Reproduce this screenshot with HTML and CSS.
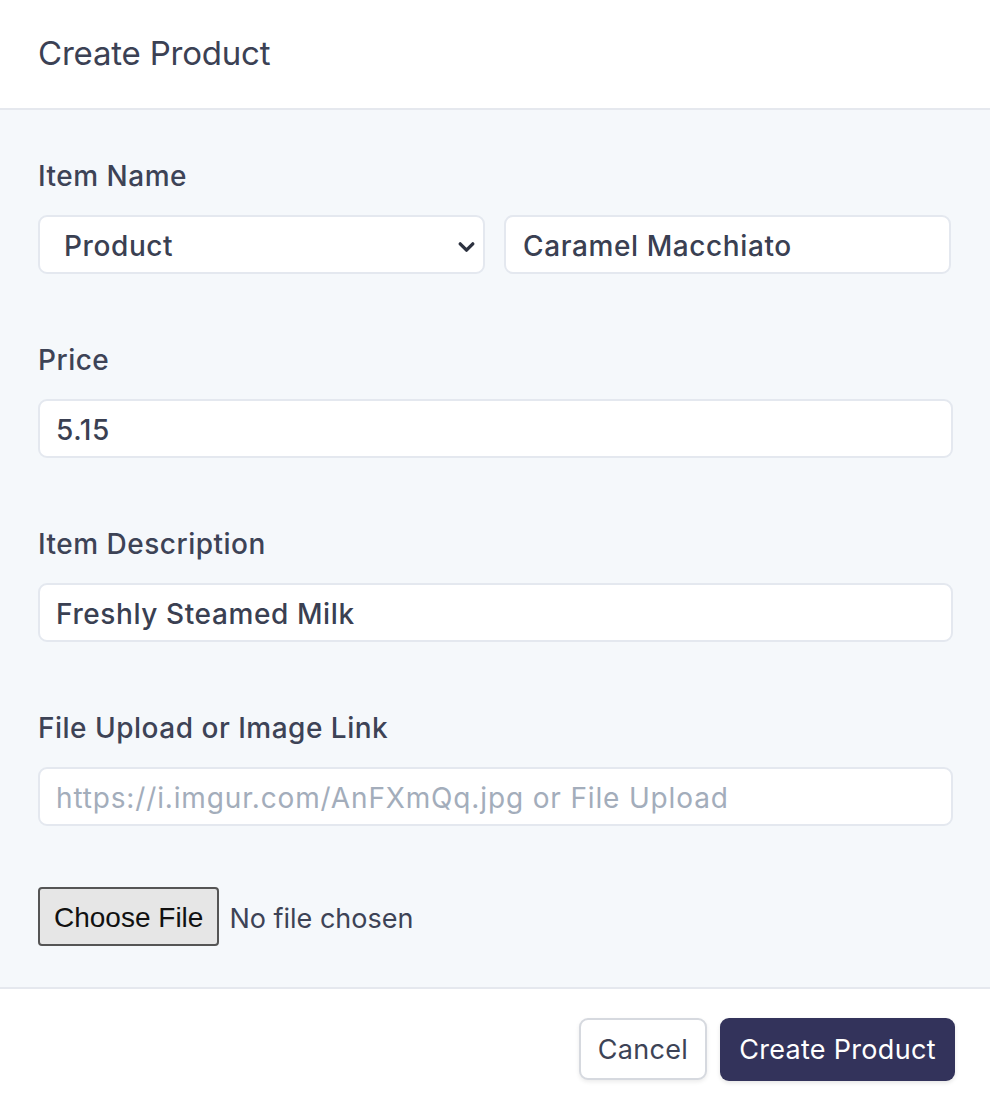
FILE: index.html
```html
<!DOCTYPE html>
<html lang="en">
<head>
<meta charset="utf-8">
<title>Create Product</title>
<link rel="stylesheet" href="styles.css">
</head>
<body>
<div class="modal">
  <header class="modal-header">
    <h1 class="modal-title">Create Product</h1>
  </header>
  <main class="modal-body">
    <div class="field">
      <label class="label">Item Name</label>
      <div class="row-two">
        <div class="select-wrap">
          <select class="control select">
            <option>Product</option>
          </select>
          <svg class="chevron" viewBox="0 0 20 20" width="20" height="20" aria-hidden="true"><path d="M4 7.5l6 6 6-6" fill="none" stroke="#2d3240" stroke-width="3.2" stroke-linecap="round" stroke-linejoin="round"/></svg>
        </div>
        <input class="control input-name" type="text" value="Caramel Macchiato">
      </div>
    </div>
    <div class="field">
      <label class="label">Price</label>
      <input class="control" type="text" value="5.15">
    </div>
    <div class="field">
      <label class="label">Item Description</label>
      <input class="control" type="text" value="Freshly Steamed Milk">
    </div>
    <div class="field">
      <label class="label">File Upload or Image Link</label>
      <input class="control" type="text" placeholder="https://i.imgur.com/AnFXmQq.jpg or File Upload">
    </div>
    <div class="file-row">
      <span class="file-btn">Choose File</span>
      <span class="file-status">No file chosen</span>
    </div>
  </main>
  <footer class="modal-footer">
    <button class="btn btn-cancel" type="button">Cancel</button>
    <button class="btn btn-primary" type="button">Create Product</button>
  </footer>
</div>
</body>
</html>
```

FILE: styles.css
```css
* { box-sizing: border-box; }
html, body { margin: 0; padding: 0; background: #ffffff; }
body {
  font-family: Inter, "Noto Sans", "Liberation Sans", sans-serif;
  color: #3d4356;
  width: 990px;
  height: 1113px;
  overflow: hidden;
}
.modal { display: flex; flex-direction: column; height: 1113px; }
.modal-header {
  height: 110px;
  padding: 33px 38px 0;
  border-bottom: 2px solid #e5e8ee;
  background: #fff;
}
.modal-title {
  margin: 0;
  font-size: 33px;
  font-weight: 400;
  line-height: 41px;
  color: #3b4154;
  letter-spacing: -0.2px;
}
.modal-body {
  background: #f5f8fb;
  padding: 44px 37px 41px 38px;
  border-bottom: 2px solid #e5e8ee;
  display: flex;
  flex-direction: column;
  gap: 64px;
}
.field { display: flex; flex-direction: column; gap: 19px; }
.label {
  font-size: 28px;
  line-height: 42px;
  font-weight: 500;
  letter-spacing: 0.5px;
  color: #3d4356;
  margin-top: 1px;
  margin-bottom: -1px;
}
.row-two { display: grid; grid-template-columns: 1fr 1fr; gap: 19px; padding-right: 2px; }
.control {
  width: 100%;
  height: 59px;
  border: 2px solid #e4e8ef;
  border-radius: 9px;
  background: #fff;
  font-family: inherit;
  font-size: 28px;
  font-weight: 500;
  letter-spacing: 0.6px;
  color: #3a4052;
  padding: 3px 16px 0;
  outline: none;
}
.control::placeholder { color: #a3adbb; font-weight: 400; letter-spacing: 0.85px; }
.select-wrap { position: relative; }
.select {
  appearance: none;
  -webkit-appearance: none;
  padding-left: 24px;
}
.chevron { position: absolute; right: 8px; top: 21px; width: 21px; height: 21px; pointer-events: none; }
.input-name { padding-left: 17px; }
.file-row { display: flex; align-items: center; gap: 10px; margin-top: -3px; }
.file-btn {
  display: inline-flex;
  align-items: center;
  height: 59px;
  padding: 2px 14px 0;
  background: #e6e6e6;
  border: 2px solid #555;
  border-radius: 4px;
  font-family: "Liberation Sans", Arial, sans-serif;
  font-size: 28px;
  color: #111;
}
.file-status {
  font-family: Inter, "Noto Sans", sans-serif;
  font-size: 27px;
  letter-spacing: 0;
  padding-top: 3px;
  color: #3d4356;
}
.modal-footer {
  flex: 1;
  display: flex;
  justify-content: flex-end;
  align-items: center;
  gap: 13px;
  padding: 0 35px 4px 0;
  background: #fff;
}
.btn {
  font-family: inherit;
  font-size: 27px;
  font-weight: 400;
  height: 63px;
  border-radius: 9px;
  padding-top: 2px;
  letter-spacing: 0.3px;
  cursor: pointer;
}
.btn-cancel {
  width: 128px;
  height: 62px;
  background: #fff;
  color: #3d4356;
  border: 2px solid #d6d9df;
  box-shadow: 0 2px 4px rgba(0,0,0,0.08);
}
.btn-primary {
  width: 235px;
  background: #33335b;
  color: #fff;
  border: none;
  box-shadow: 0 2px 4px rgba(0,0,0,0.1);
}
```
